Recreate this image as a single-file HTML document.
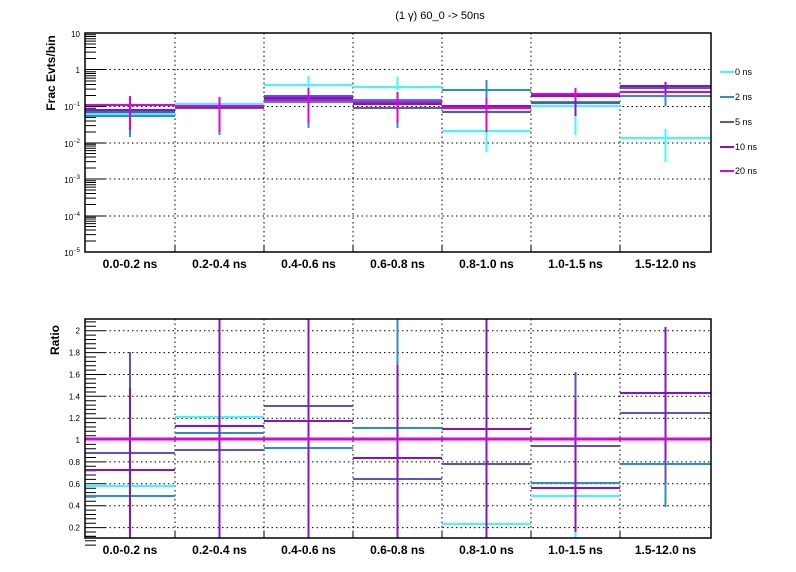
<!DOCTYPE html>
<html><head><meta charset="utf-8"><style>
html,body{margin:0;padding:0;background:#fff;}
svg{display:block;font-family:"Liberation Sans",sans-serif;}
.g{stroke:#000;stroke-width:1;stroke-dasharray:1.5 3;fill:none}
.t{stroke:#000;stroke-width:1;fill:none}
.yl{font-size:8px;text-anchor:end}
.xl{font-size:12px;font-weight:bold;text-anchor:middle}
</style></head><body>
<svg width="796" height="572" viewBox="0 0 796 572" xmlns="http://www.w3.org/2000/svg">
<rect width="796" height="572" fill="#fff"/>
<text x="440" y="19" font-size="11" text-anchor="middle">(1 γ) 60_0 -&gt; 50ns</text>

<g class="g">
<path d="M105 69.5H711M105 106.5H711M105 143H711M105 179H711M105 216H711"/>
<path d="M175 33V252M264 33V252M353 33V252M442 33V252M531 33V252M620 33V252"/>
</g>
<g class="t">
<path d="M85 33h20M85 69.5h20M85 106.5h20M85 143h20M85 179h20M85 216h20M85 252h20"/>
<path id="dec" d="M85 241h11M85 234.6h11M85 230h11M85 226.5h11M85 223.6h11M85 221.2h11M85 219h11M85 217.2h11"/>
<use href="#dec" y="-36.5"/><use href="#dec" y="-73"/><use href="#dec" y="-109"/><use href="#dec" y="-145.5"/><use href="#dec" y="-182.5"/>
<path d="M175 252v-6M264 252v-6M353 252v-6M442 252v-6M531 252v-6M620 252v-6"/>
</g>
<g class="yl">
<text x="80" y="37">10</text><text x="80" y="73">1</text>
<text x="80" y="110">10<tspan dy="-4" font-size="6">−1</tspan></text>
<text x="80" y="147">10<tspan dy="-4" font-size="6">−2</tspan></text>
<text x="80" y="183">10<tspan dy="-4" font-size="6">−3</tspan></text>
<text x="80" y="220">10<tspan dy="-4" font-size="6">−4</tspan></text>
<text x="80" y="256">10<tspan dy="-4" font-size="6">−5</tspan></text>
</g>
<text transform="translate(55,73) rotate(-90)" font-size="12" font-weight="bold" text-anchor="middle">Frac Evts/bin</text>

<g stroke-width="2" fill="none">
<g stroke="#33ffff"><path d="M85 114H175M175 104H264M264 85H353M353 87H442M442 131H531M531 106H620M620 138H711"/>
<path d="M308.5 76V90M397.5 77V90M486.5 131V152M575.5 116V135M665.5 129V162"/></g>
<g stroke="#2a8fd0"><path d="M85 116H175M175 106H264M264 102H353M353 100H442M442 90H531M531 102H620M620 96H711"/>
<path d="M130 110V137M219.5 110V135M308.5 110V128M397.5 110V128M486.5 80V100M665.5 95V106"/></g>
<g stroke="#5555cc"><path d="M85 112H175M175 108H264M264 96H353M353 108H442M442 112H531M531 103H620M620 88H711"/></g>
<g stroke="#8a10cc"><path d="M85 110H175M175 107H264M264 98H353M353 104H442M442 106H531M531 96H620M620 86H711"/>
<path d="M575.5 100V116M665.5 82V95"/></g>
<g stroke="#e000e0"><path d="M85 105H175M175 106H264M264 100H353M353 102H442M442 108H531M531 94H620M620 92H711"/>
<path d="M130 96V130M219.5 97V132M308.5 88V123M397.5 92V123M486.5 98V132M575.5 88V100"/></g>
</g>
<rect x="85" y="33" width="626" height="219" fill="none" stroke="#000" stroke-width="1.5"/>

<g class="xl">
<text x="130" y="268">0.0-0.2 ns</text><text x="219.5" y="268">0.2-0.4 ns</text><text x="308.5" y="268">0.4-0.6 ns</text><text x="397.5" y="268">0.6-0.8 ns</text><text x="486.5" y="268">0.8-1.0 ns</text><text x="575.5" y="268">1.0-1.5 ns</text><text x="665.5" y="268">1.5-12.0 ns</text>
</g>

<g stroke-width="2">
<path d="M720 72h14" stroke="#33ffff"/><path d="M720 97h14" stroke="#2a8fd0"/><path d="M720 122h14" stroke="#5555cc"/><path d="M720 147h14" stroke="#8a10cc"/><path d="M720 171h14" stroke="#e000e0"/>
</g>
<g font-size="9">
<text x="735" y="75">0 ns</text><text x="735" y="100">2 ns</text><text x="735" y="125">5 ns</text><text x="735" y="150">10 ns</text><text x="735" y="174">20 ns</text>
</g>

<g class="g">
<path d="M105 330.7H711M105 352.6H711M105 374.5H711M105 396.3H711M105 418.2H711M105 440H711M105 461.9H711M105 483.8H711M105 505.7H711M105 527.6H711"/>
<path d="M175 319V538M264 319V538M353 319V538M442 319V538M531 319V538M620 319V538"/>
</g>
<g class="t">
<path d="M85 330.7h20M85 352.6h20M85 374.5h20M85 396.3h20M85 418.2h20M85 440h20M85 461.9h20M85 483.8h20M85 505.7h20M85 527.6h20"/>
<path id="mn" d="M85 335.1h11M85 339.5h11M85 343.8h11M85 348.2h11"/>
<use href="#mn" y="21.9"/><use href="#mn" y="43.8"/><use href="#mn" y="65.6"/><use href="#mn" y="87.5"/><use href="#mn" y="109.3"/><use href="#mn" y="131.2"/><use href="#mn" y="153.1"/><use href="#mn" y="175"/><use href="#mn" y="196.9"/>
<path d="M85 326.3h11M85 321.9h11M85 532h11M85 536.4h11"/>
<path d="M175 538v-6M264 538v-6M353 538v-6M442 538v-6M531 538v-6M620 538v-6"/>
</g>
<g class="yl">
<text x="80" y="333.7">2</text><text x="80" y="355.6">1.8</text><text x="80" y="377.5">1.6</text><text x="80" y="399.3">1.4</text><text x="80" y="421.2">1.2</text><text x="80" y="443">1</text><text x="80" y="464.9">0.8</text><text x="80" y="486.8">0.6</text><text x="80" y="508.7">0.4</text><text x="80" y="530.6">0.2</text>
</g>
<text transform="translate(59,340) rotate(-90)" font-size="12" font-weight="bold" text-anchor="middle">Ratio</text>

<g stroke-width="2" fill="none">
<g stroke="#33ffff"><path d="M85 486H175M175 417H264M442 524H531M531 496H620"/><path d="M575.5 532V538"/></g>
<g stroke="#2a8fd0"><path d="M85 496H175M175 433H264M264 448H353M353 428H442M531 483H620M620 464H711"/><path d="M397.5 319V370M665.5 483V507"/></g>
<g stroke="#5555cc"><path d="M85 453H175M175 450H264M264 406H353M353 479H442M442 464H531M531 446H620M620 413H711"/><path d="M130 352V390M575.5 372V400M665.5 460V483"/></g>
<g stroke="#8a10cc"><path d="M85 470H175M175 426H264M264 421H353M353 458H442M442 429H531M531 488H620M620 393H711"/><path d="M130 388V538M219.5 319V538M308.5 319V538M397.5 365V538M486.5 319V538M575.5 400V532M665.5 327V460"/></g>
<path d="M85 439H711" stroke="#e000e0" stroke-width="3"/>
</g>
<rect x="85" y="319" width="626" height="219" fill="none" stroke="#000" stroke-width="1.5"/>

<g class="xl">
<text x="130" y="554">0.0-0.2 ns</text><text x="219.5" y="554">0.2-0.4 ns</text><text x="308.5" y="554">0.4-0.6 ns</text><text x="397.5" y="554">0.6-0.8 ns</text><text x="486.5" y="554">0.8-1.0 ns</text><text x="575.5" y="554">1.0-1.5 ns</text><text x="665.5" y="554">1.5-12.0 ns</text>
</g>
</svg>
</body></html>
